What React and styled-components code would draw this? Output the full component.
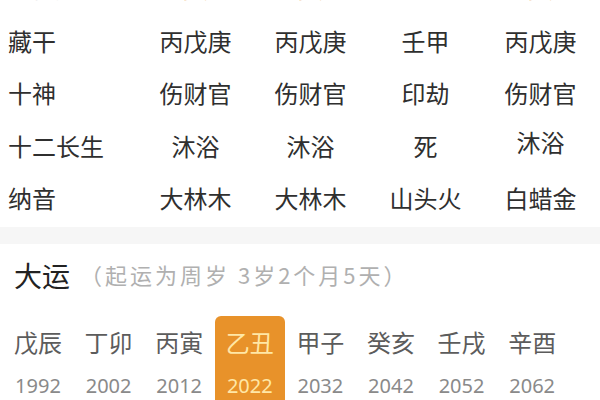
import styled, { createGlobalStyle } from "styled-components";

const Global = createGlobalStyle`
  html, body {
    margin: 0;
    padding: 0;
    background: #ffffff;
    font-family: "Noto Sans CJK SC", "Noto Sans", sans-serif;
  }
`;

const Page = styled.div`
  width: 600px;
  height: 400px;
  overflow: hidden;
  background: #ffffff;
`;

const TopStrip = styled.div`
  height: 2px;
  overflow: hidden;
  display: grid;
  grid-template-columns: 130px repeat(4, 115px);
  padding-left: 8px;
  opacity: 0.7;
`;

const TopCell = styled.div`
  margin-top: -28px;
  font-size: 26px;
  line-height: 30px;
  text-align: ${(p) => (p.$dark ? "left" : "center")};
  color: ${(p) => (p.$dark ? "#ccc" : "#e8922a")};
`;

const Table = styled.div`
  display: grid;
  grid-template-columns: 130px repeat(4, 115px);
  grid-auto-rows: 52.5px;
  padding-left: 8px;
  padding-top: 12px;
  color: #2f2f2f;
`;

const Label = styled.div`
  display: flex;
  align-items: center;
  font-size: 24px;
`;

const Cell = styled.div`
  display: flex;
  align-items: center;
  justify-content: center;
  font-size: 24px;
  ${(p) => p.$up && "padding-bottom: 7px;"}
`;

const Divider = styled.div`
  height: 17px;
  margin-top: 3px;
  background: #f6f6f6;
`;

const Heading = styled.div`
  display: flex;
  align-items: center;
  padding: 12px 0 0 14px;
  height: 38px;
`;

const HeadTitle = styled.span`
  font-size: 28px;
  color: #222;
`;

const HeadNote = styled.span`
  font-size: 22px;
  letter-spacing: 3px;
  color: #b0b0b0;
  margin-left: 10px;
  margin-top: -2px;
`;

const LuckRow = styled.div`
  display: flex;
  gap: 0.6px;
  padding-left: 3px;
  margin-top: 22px;
`;

const LuckItem = styled.div`
  width: 70px;
  height: 100px;
  display: flex;
  flex-direction: column;
  align-items: center;
  border-radius: 6px;
  background: ${(p) => (p.$active ? "#e8922a" : "transparent")};
  color: ${(p) => (p.$active ? "#ffe7a6" : "#5c5c5c")};
`;

const Pillar = styled.div`
  font-size: 24px;
  line-height: 24px;
  margin-top: 14px;
`;

const Year = styled.div`
  font-size: 20px;
  line-height: 20px;
  margin-top: 22px;
  color: ${(p) => (p.$active ? "#ffe7a6" : "#8a8a8a")};
  font-family: "Noto Sans", sans-serif;
`;

const rows = [
  { label: "藏干", cells: ["丙戊庚", "丙戊庚", "壬甲", "丙戊庚"] },
  { label: "十神", cells: ["伤财官", "伤财官", "印劫", "伤财官"] },
  { label: "十二长生", cells: ["沐浴", "沐浴", "死", "沐浴"], up: 3 },
  { label: "纳音", cells: ["大林木", "大林木", "山头火", "白蜡金"] },
];

const luck = [
  ["戊辰", 1992],
  ["丁卯", 2002],
  ["丙寅", 2012],
  ["乙丑", 2022],
  ["甲子", 2032],
  ["癸亥", 2042],
  ["壬戌", 2052],
  ["辛酉", 2062],
];

export default function App() {
  return (
    <Page>
      <Global />
      <TopStrip>
        <TopCell $dark>地支</TopCell>
        <TopCell>寅</TopCell>
        <TopCell>寅</TopCell>
        <TopCell>子</TopCell>
        <TopCell>寅</TopCell>
      </TopStrip>
      <Table>
        {rows.map((r) => (
          <>
            <Label key={r.label}>{r.label}</Label>
            {r.cells.map((c, i) => (
              <Cell key={r.label + i} $up={r.up === i}>
                {c}
              </Cell>
            ))}
          </>
        ))}
      </Table>
      <Divider />
      <Heading>
        <HeadTitle>大运</HeadTitle>
        <HeadNote>（起运为周岁 3岁2个月5天）</HeadNote>
      </Heading>
      <LuckRow>
        {luck.map(([p, y]) => (
          <LuckItem key={y} $active={y === 2022}>
            <Pillar>{p}</Pillar>
            <Year $active={y === 2022}>{y}</Year>
          </LuckItem>
        ))}
      </LuckRow>
    </Page>
  );
}
